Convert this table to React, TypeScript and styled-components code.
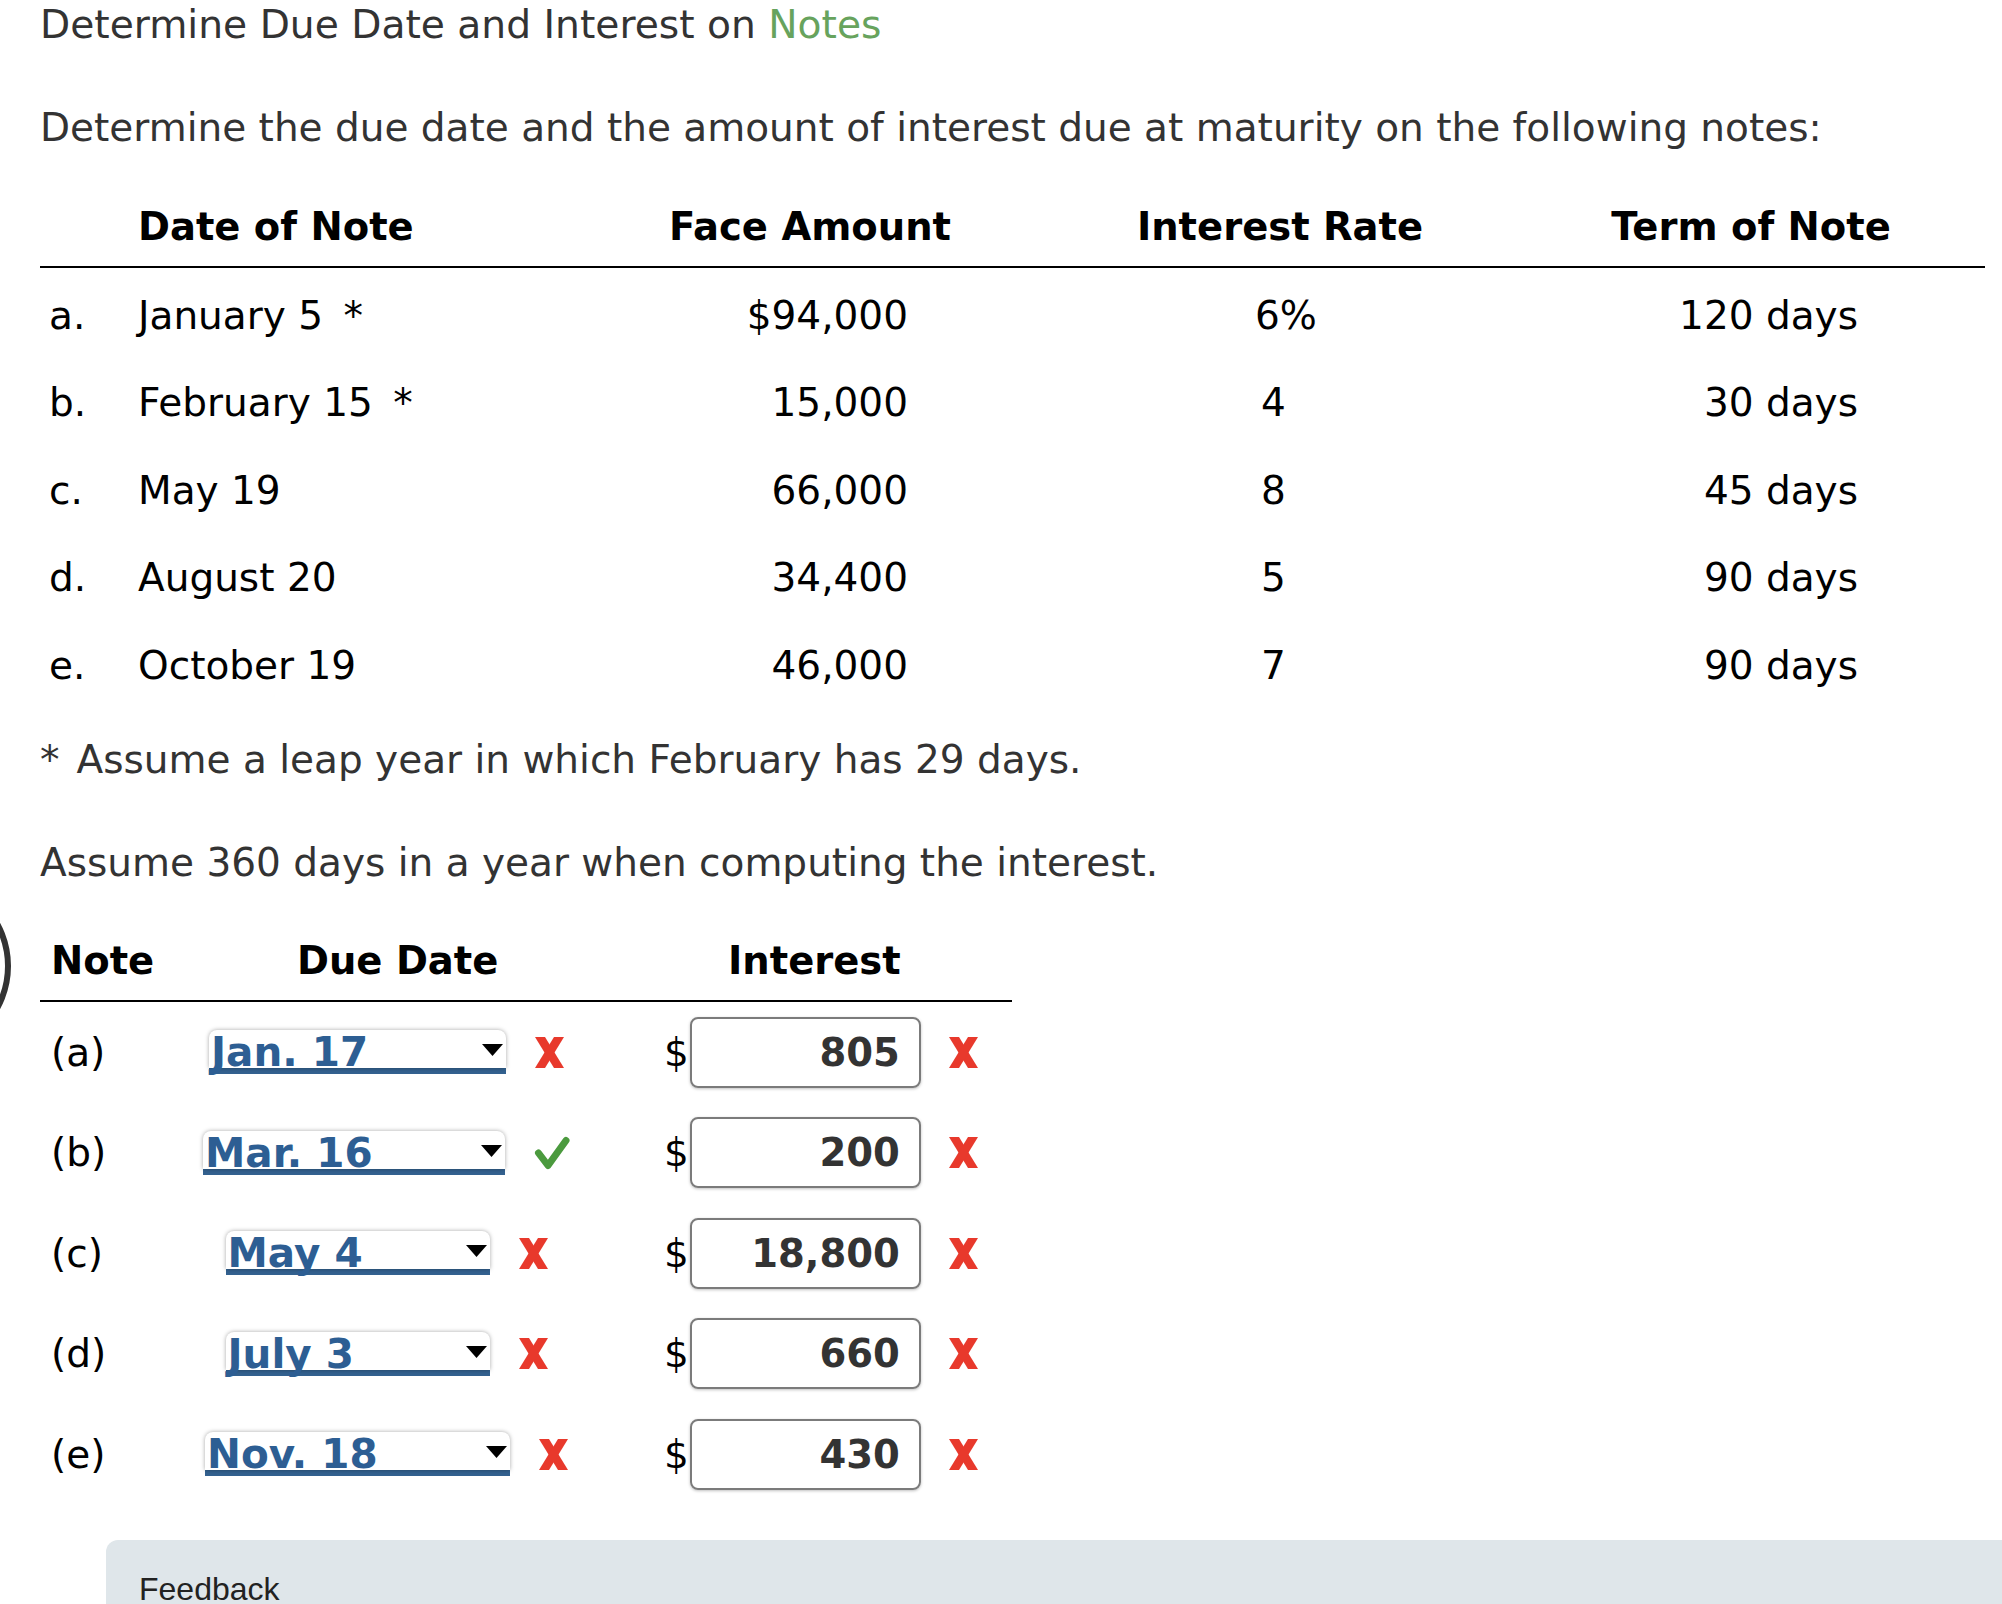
import styled, { createGlobalStyle } from "styled-components";

const GlobalStyle = createGlobalStyle`
	html, body {
		margin: 0;
		padding: 0;
		background: #fff;
	}
	body {
		font-family: "DejaVu Sans", Verdana, sans-serif;
		overflow: hidden;
	}
`;

type Note = { letter: string; date: string; star?: boolean; face: string; rate: string; pct?: boolean; term: string };

const notes: Note[] = [
	{ letter: "a.", date: "January 5", star: true, face: "$94,000", rate: "6", pct: true, term: "120 days" },
	{ letter: "b.", date: "February 15", star: true, face: "15,000", rate: "4", term: "30 days" },
	{ letter: "c.", date: "May 19", face: "66,000", rate: "8", term: "45 days" },
	{ letter: "d.", date: "August 20", face: "34,400", rate: "5", term: "90 days" },
	{ letter: "e.", date: "October 19", face: "46,000", rate: "7", term: "90 days" },
];

type Answer = { label: string; due: string; width: number; dueOk: boolean; interest: string };

const answers: Answer[] = [
	{ label: "(a)", due: "Jan. 17", width: 297, dueOk: false, interest: "805" },
	{ label: "(b)", due: "Mar. 16", width: 302, dueOk: true, interest: "200" },
	{ label: "(c)", due: "May 4", width: 264, dueOk: false, interest: "18,800" },
	{ label: "(d)", due: "July 3", width: 264, dueOk: false, interest: "660" },
	{ label: "(e)", due: "Nov. 18", width: 305, dueOk: false, interest: "430" },
];

const Cross = () => (
	<MarkIcon width="31" height="31" viewBox="0 0 31 31">
		<polygon points="1,0 11,0 30,31 20,31" fill="#e8392c" />
		<polygon points="20,0 30,0 11,31 1,31" fill="#e8392c" />
	</MarkIcon>
);

const Check = () => (
	<MarkIcon width="38" height="36" viewBox="0 0 38 36">
		<path
			d="M5.5 18 L15 30.5 L33 5.5"
			stroke="#4b9a3e"
			strokeWidth="7"
			fill="none"
			strokeLinecap="round"
			strokeLinejoin="round"
		/>
	</MarkIcon>
);

const App = () => {
	return (
		<Page>
			<GlobalStyle />
			<HelpRing />
			<Title>
				Determine Due Date and Interest on <Accent>Notes</Accent>
			</Title>
			<Prompt>Determine the due date and the amount of interest due at maturity on the following notes:</Prompt>

			<NotesGrid>
				<HeadCell />
				<HeadCell>Date of Note</HeadCell>
				<HeadCell $center>Face Amount</HeadCell>
				<HeadCell $center>Interest Rate</HeadCell>
				<HeadCell $center $shift={17}>
					Term of Note
				</HeadCell>
				{notes.map(n => (
					<Row key={n.letter}>
						<LetterCell>{n.letter}</LetterCell>
						<Cell>
							{n.date}
							{n.star && <Star> *</Star>}
						</Cell>
						<AmountCell>{n.face}</AmountCell>
						<RateCell $pct={n.pct}>
							{n.rate}
							{n.pct && "%"}
						</RateCell>
						<TermCell>{n.term}</TermCell>
					</Row>
				))}
			</NotesGrid>

			<Footnote>
				<NoteMark>*</NoteMark>Assume a leap year in which February has 29 days.
			</Footnote>
			<Assume>Assume 360 days in a year when computing the interest.</Assume>

			<AnswerGrid>
				<AnswerHead>Note</AnswerHead>
				<AnswerHead $pad={107}>Due Date</AnswerHead>
				<AnswerHead $pad={144}>Interest</AnswerHead>
				{answers.map(a => (
					<Row key={a.label}>
						<LabelCell>{a.label}</LabelCell>
						<DueCell>
							<Dropdown $w={a.width}>
								<DropBox>
									<DropText>{a.due}</DropText>
									<Arrow width="21" height="12" viewBox="0 0 21 12">
										<polygon points="0,0 21,0 10.5,12" fill="#000" />
									</Arrow>
								</DropBox>
							</Dropdown>
							{a.dueOk ? <Check /> : <Cross />}
						</DueCell>
						<InterestCell>
							<Dollar>$</Dollar>
							<AmountBox>{a.interest}</AmountBox>
							<Cross />
						</InterestCell>
					</Row>
				))}
			</AnswerGrid>

			<Feedback>
				<FeedbackLabel>Feedback</FeedbackLabel>
			</Feedback>
		</Page>
	);
};

export default App;

const Page = styled.div`
	position: relative;
	width: 2002px;
	height: 1604px;
	overflow: hidden;
	padding: 2px 0 0 40px;
	box-sizing: border-box;
	color: #000;
	font-size: 39px;
`;

const HelpRing = styled.div`
	position: absolute;
	left: -169px;
	top: 876px;
	width: 180px;
	height: 180px;
	border: 6px solid #333;
	border-radius: 50%;
	box-sizing: border-box;
`;

const Title = styled.h1`
	margin: 0;
	font-size: 39.2px;
	font-weight: normal;
	line-height: 46px;
	color: #333;
`;

const Accent = styled.span`
	color: #67a35d;
`;

const Prompt = styled.p`
	margin: 57px 0 0;
	line-height: 46px;
	color: #333;
`;

const NotesGrid = styled.div`
	display: grid;
	grid-template-columns: 98px 422px 500px 440px 485px;
	width: 1945px;
	margin-top: 35px;
`;

const Row = styled.div`
	display: contents;
`;

const HeadCell = styled.div<{ $center?: boolean; $shift?: number }>`
	height: 80px;
	display: flex;
	align-items: center;
	justify-content: ${p => (p.$center ? "center" : "flex-start")};
	padding-left: ${p => p.$shift ?? 0}px;
	font-size: 38.5px;
	font-weight: bold;
	border-bottom: 2px solid #000;
`;

const Cell = styled.div`
	height: 87.5px;
	box-sizing: border-box;
	padding-top: 7px;
	display: flex;
	align-items: center;
	white-space: pre;
`;

const Star = styled.span`
	margin-left: 8px;
`;

const LetterCell = styled(Cell)`
	padding-left: 9px;
`;

const AmountCell = styled(Cell)`
	justify-content: flex-end;
	padding-right: 152px;
`;

const RateCell = styled(Cell)<{ $pct?: boolean }>`
	padding-left: ${p => (p.$pct ? 195 : 201)}px;
`;

const TermCell = styled(Cell)`
	justify-content: flex-end;
	padding-right: 127px;
`;

const Footnote = styled.p`
	margin: 31.5px 0 0;
	line-height: 46px;
	color: #333;
`;

const NoteMark = styled.span`
	margin-right: 17px;
`;

const Assume = styled.p`
	margin: 57px 0 0;
	line-height: 46px;
	color: #333;
`;

const AnswerGrid = styled.div`
	display: grid;
	grid-template-columns: 150px 394px 428px;
	width: 972px;
	margin-top: 34px;
`;

const AnswerHead = styled.div<{ $pad?: number }>`
	height: 80px;
	display: flex;
	align-items: center;
	padding-left: ${p => p.$pad ?? 11}px;
	font-size: 38.5px;
	font-weight: bold;
	border-bottom: 2px solid #000;
`;

const AnswerCell = styled.div`
	height: 100.5px;
	display: flex;
	align-items: center;
	white-space: nowrap;
`;

const LabelCell = styled(AnswerCell)`
	padding-left: 11px;
`;

const DueCell = styled(AnswerCell)`
	justify-content: center;
	gap: 28px;
`;

const Dropdown = styled.div<{ $w: number }>`
	width: ${p => p.$w}px;
	border-bottom: 6px solid #33618f;
`;

const DropBox = styled.div`
	height: 38px;
	box-sizing: border-box;
	background: #fff;
	border-radius: 8px 8px 0 0;
	box-shadow: 0 0 4px rgba(0, 0, 0, 0.35);
	display: flex;
	justify-content: space-between;
	padding: 0 3px 0 2px;
`;

const DropText = styled.span`
	display: block;
	padding-top: 3px;
	line-height: 38px;
	height: 38px;
	box-sizing: border-box;
	font-size: 40.5px;
	font-weight: bold;
	color: #2d5e93;
`;

const Arrow = styled.svg`
	display: block;
	margin-top: 14px;
`;

const MarkIcon = styled.svg`
	display: block;
	flex-shrink: 0;
`;

const InterestCell = styled(AnswerCell)`
	padding-left: 80px;
	& > svg {
		margin-left: 27px;
	}
`;

const Dollar = styled.span`
	margin-right: 1px;
`;

const AmountBox = styled.div`
	width: 231px;
	height: 71px;
	box-sizing: border-box;
	border: 2px solid #7b7b7b;
	border-radius: 8px;
	box-shadow: 0 1px 3px rgba(0, 0, 0, 0.25);
	display: flex;
	align-items: center;
	justify-content: flex-end;
	padding-right: 19px;
	font-size: 38.5px;
	font-weight: bold;
	color: #333;
`;

const Feedback = styled.div`
	margin: 35.5px 0 0 66px;
	height: 200px;
	background: #dfe6ea;
	border-radius: 12px 0 0 0;
	padding: 37px 33px 0;
	box-sizing: border-box;
`;

const FeedbackLabel = styled.div`
	font-family: "Liberation Sans", Arial, sans-serif;
	font-size: 32px;
	line-height: 24px;
	color: #222;
`;
